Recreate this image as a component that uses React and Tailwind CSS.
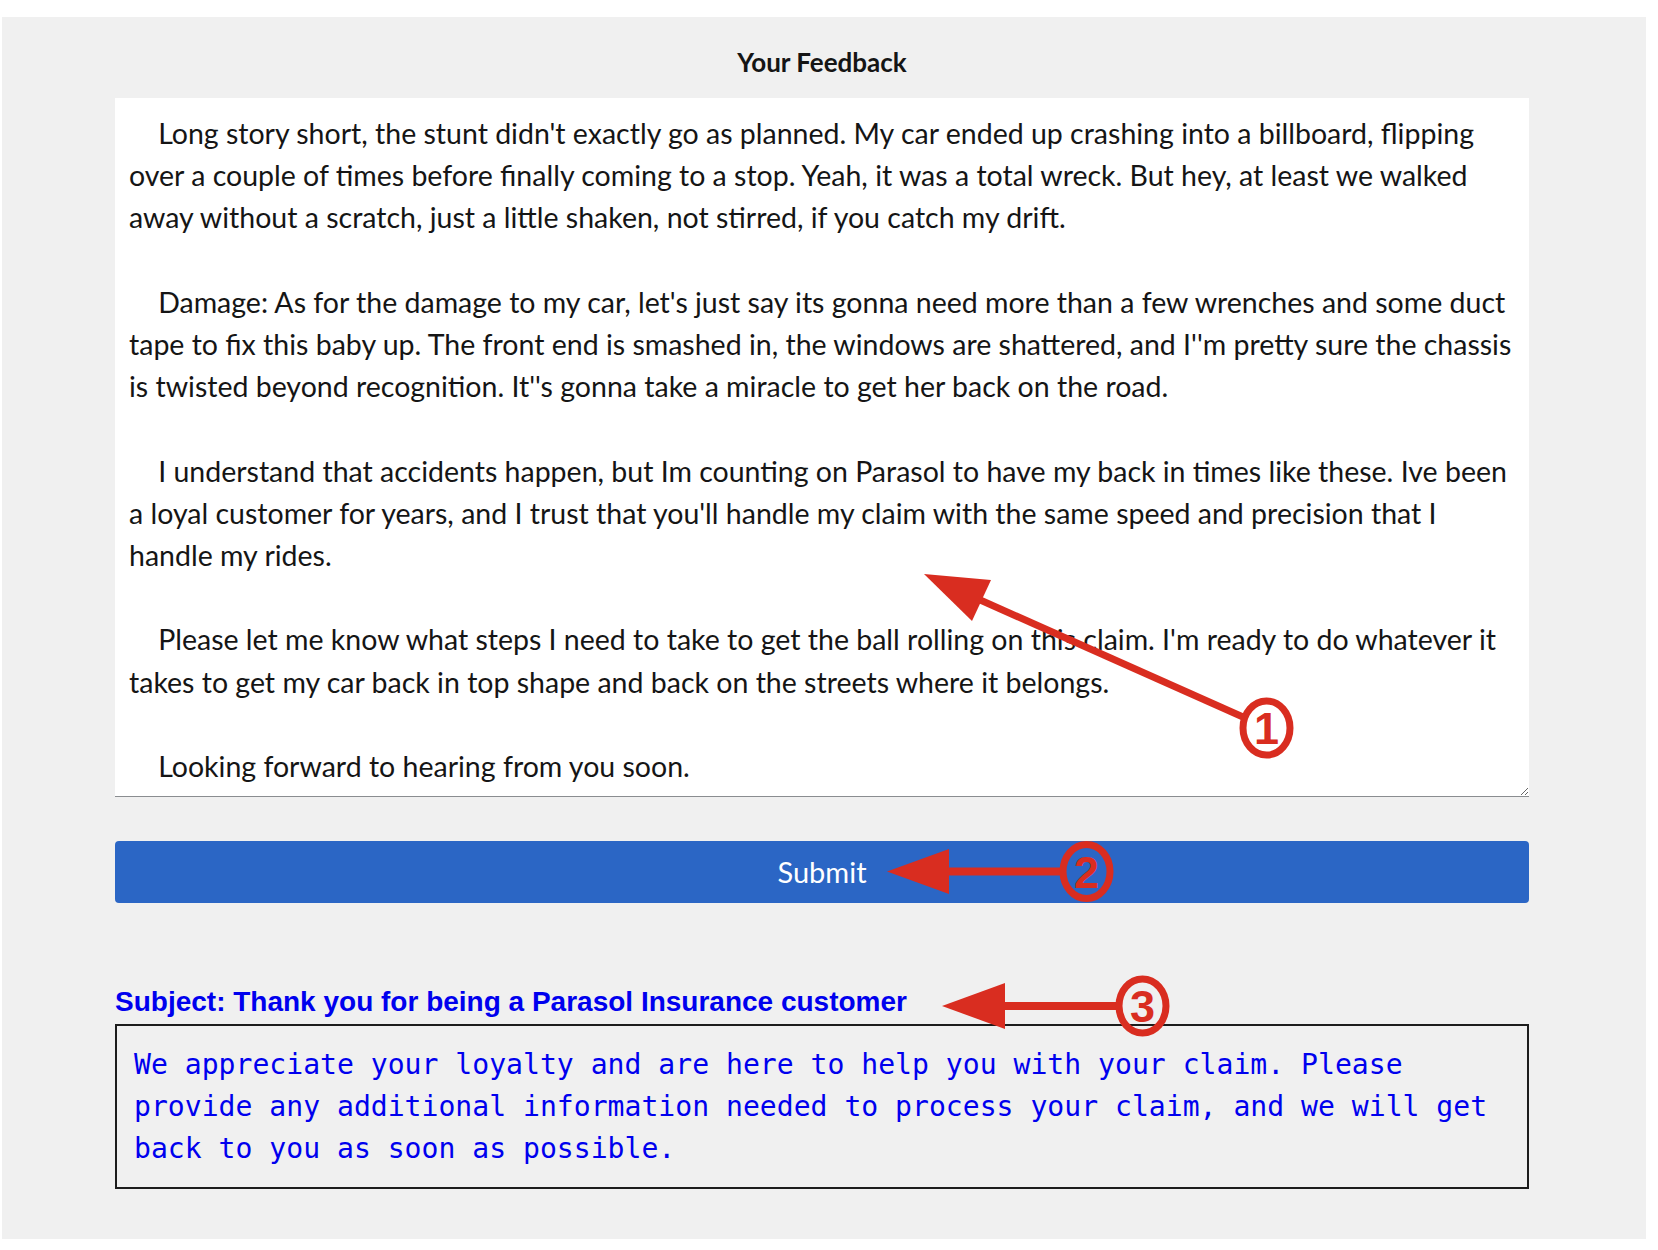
import React from "react";

const feedback = [
  "    Long story short, the stunt didn't exactly go as planned. My car ended up crashing into a billboard, flipping",
  "over a couple of times before finally coming to a stop. Yeah, it was a total wreck. But hey, at least we walked",
  "away without a scratch, just a little shaken, not stirred, if you catch my drift.",
  "",
  "    Damage: As for the damage to my car, let's just say its gonna need more than a few wrenches and some duct",
  "tape to fix this baby up. The front end is smashed in, the windows are shattered, and I''m pretty sure the chassis",
  "is twisted beyond recognition. It''s gonna take a miracle to get her back on the road.",
  "",
  "    I understand that accidents happen, but Im counting on Parasol to have my back in times like these. Ive been",
  "a loyal customer for years, and I trust that you'll handle my claim with the same speed and precision that I",
  "handle my rides.",
  "",
  "    Please let me know what steps I need to take to get the ball rolling on this claim. I'm ready to do whatever it",
  "takes to get my car back in top shape and back on the streets where it belongs.",
  "",
  "    Looking forward to hearing from you soon.",
].join("\n");

const red = "#d92d20";

// numbered callouts drawn over the page
const Callout = ({ cx, cy, n }) => (
  <g>
    <ellipse cx={cx} cy={cy} rx={23.5} ry={27} fill="none" stroke={red} strokeWidth={7} />
    <text
      x={cx}
      y={cy + 16}
      textAnchor="middle"
      fill={red}
      fontSize="45"
      fontWeight="700"
      fontFamily="'Liberation Sans', Arial, sans-serif"
    >
      {n}
    </text>
  </g>
);

const Annotations = () => (
  <svg className="absolute left-0 top-0 pointer-events-none" width="1658" height="1250" viewBox="0 0 1658 1250">
    <line x1="1243" y1="717" x2="978" y2="599" stroke={red} strokeWidth="7" />
    <polygon points="924,574 991,580 972,621" fill={red} />
    <Callout cx={1266.5} cy={728} n="1" />

    <line x1="945" y1="871.5" x2="1060" y2="871.5" stroke={red} strokeWidth="8" />
    <polygon points="887,871.5 949,849 949,894" fill={red} />
    <Callout cx={1086.5} cy={871.5} n="2" />

    <line x1="1001" y1="1006" x2="1116" y2="1006" stroke={red} strokeWidth="8" />
    <polygon points="942,1006 1005,983 1005,1029" fill={red} />
    <Callout cx={1142.5} cy={1006} n="3" />
  </svg>
);

export default function App() {
  return (
    <div className="relative w-[1658px] h-[1250px] bg-white">
      <div className="pl-[2px] pt-[17px]">
        <div className="w-[1644px] h-[1222px] bg-[#f0f0f0] pt-[27px]">
          <div className="w-[1414px] ml-[113px]">
            <h2 className="text-center font-['Lato',sans-serif] font-bold text-[26px] leading-[37px] text-[#151515]">
              Your Feedback
            </h2>

            <textarea
              readOnly
              wrap="off"
              defaultValue={feedback}
              className="mt-[17px] block w-full h-[699px] overflow-hidden bg-white border-0 border-b border-[#8a8d90] px-[14px] pt-[14px] font-['Lato',sans-serif] text-[28.5px] leading-[42.2px] text-[#151515] outline-none"
            />

            <button className="mt-[44px] block w-full h-[62px] rounded-[4px] bg-[#2b66c5] text-white font-['Lato',sans-serif] text-[29px]">
              Submit
            </button>

            <div className="mt-[83px] font-['Liberation_Sans',Arial,sans-serif] font-bold text-[28px] leading-[32px] text-[#0000ee]">
              Subject: Thank you for being a Parasol Insurance customer
            </div>

            <pre className="mt-[6px] border-2 border-[#1c1c1c] pl-[17px] pr-[14px] pt-[18px] pb-[17px] whitespace-pre-wrap font-['DejaVu_Sans_Mono',monospace] text-[28.1px] leading-[42px] text-[#0000ee]">
              We appreciate your loyalty and are here to help you with your claim. Please provide any additional information needed to process your claim, and we will get back to you as soon as possible.
            </pre>
          </div>
        </div>
      </div>
      <Annotations />
    </div>
  );
}
